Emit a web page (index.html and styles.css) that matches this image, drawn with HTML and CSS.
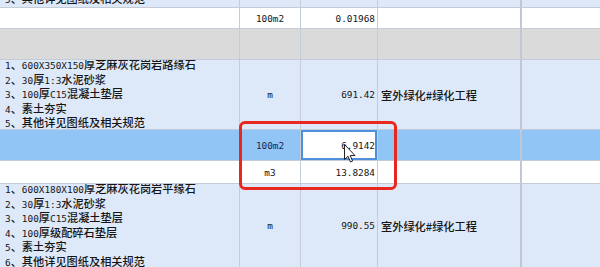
FILE: index.html
```html
<!DOCTYPE html>
<html lang="zh">
<head>
<meta charset="utf-8">
<title>清单</title>
<link rel="stylesheet" href="styles.css">
</head>
<body>
<div class="sheet">
  <div class="row blue r0">
    <div class="c c1 bottom"><div class="lines"><p><span class="a">5</span>、其他详见图纸及相关规范</p></div></div>
    <div class="c c2"></div><div class="c c3"></div><div class="c c4"></div><div class="c c5"></div>
  </div>
  <div class="row white r1">
    <div class="c c1"></div>
    <div class="c c2 mono center">100m2</div>
    <div class="c c3 mono right">0.01968</div>
    <div class="c c4"></div><div class="c c5"></div>
  </div>
  <div class="row grey r2">
    <div class="c c1"></div><div class="c c2"></div><div class="c c3"></div><div class="c c4"></div><div class="c c5"></div>
  </div>
  <div class="row blue r3">
    <div class="c c1"><div class="lines">
      <p><span class="a">1</span>、<span class="a">600X350X150</span>厚芝麻灰花岗岩路缘石</p>
      <p><span class="a">2</span>、<span class="a">30</span>厚<span class="a">1:3</span>水泥砂浆</p>
      <p><span class="a">3</span>、<span class="a">100</span>厚<span class="a">C15</span>混凝土垫层</p>
      <p><span class="a">4</span>、素土夯实</p>
      <p><span class="a">5</span>、其他详见图纸及相关规范</p>
    </div></div>
    <div class="c c2 mono center">m</div>
    <div class="c c3 mono right">691.42</div>
    <div class="c c4 cjk">室外绿化#绿化工程</div>
    <div class="c c5"></div>
  </div>
  <div class="row sel r4">
    <div class="c c1"></div>
    <div class="c c2 mono center navy">100m2</div>
    <div class="c c3 mono right edit">6.9142</div>
    <div class="c c4"></div><div class="c c5"></div>
  </div>
  <div class="row white r5">
    <div class="c c1"></div>
    <div class="c c2 mono center">m3</div>
    <div class="c c3 mono right">13.8284</div>
    <div class="c c4"></div><div class="c c5"></div>
  </div>
  <div class="row blue r6">
    <div class="c c1"><div class="lines">
      <p><span class="a">1</span>、<span class="a">600X180X100</span>厚芝麻灰花岗岩平缘石</p>
      <p><span class="a">2</span>、<span class="a">30</span>厚<span class="a">1:3</span>水泥砂浆</p>
      <p><span class="a">3</span>、<span class="a">100</span>厚<span class="a">C15</span>混凝土垫层</p>
      <p><span class="a">4</span>、<span class="a">100</span>厚级配碎石垫层</p>
      <p><span class="a">5</span>、素土夯实</p>
      <p><span class="a">6</span>、其他详见图纸及相关规范</p>
    </div></div>
    <div class="c c2 mono center">m</div>
    <div class="c c3 mono right">990.55</div>
    <div class="c c4 cjk">室外绿化#绿化工程</div>
    <div class="c c5"></div>
  </div>
</div>
<div class="mark"></div>
<svg class="cursor" width="12" height="19" viewBox="0 0 12 19" aria-hidden="true">
  <path d="M0.5 0.5 L0.5 15.5 L4 12.2 L6.5 18 L8.6 17.1 L6.2 11.5 L11 11.5 Z" fill="#ffffff" stroke="#222222" stroke-width="1" stroke-linejoin="round"/>
</svg>
</body>
</html>
```

FILE: styles.css
```css
html, body {
  margin: 0;
  padding: 0;
  background: #dde8f8;
  overflow: hidden;
}
body {
  font-family: "Noto Sans CJK SC", "Noto Sans", sans-serif;
  color: #151515;
  width: 600px;
  height: 267px;
}
.sheet {
  display: flex;
  flex-direction: column;
}
.row {
  display: grid;
  grid-template-columns: 240px 61px 77px 144px 1fr;
  border-bottom: 1px solid #c4ccd7;
  box-sizing: border-box;
}
.blue { background: #dde8f8; }
.white { background: #ffffff; }
.grey { background: #dadada; }
.sel { background: #91c5f5; }

.r0 { height: 8px; }
.r1 { height: 21px; }
.r2 { height: 31px; }
.r3 { height: 70px; }
.r4 { height: 31px; }
.r5 { height: 23px; }
.r6 { height: 84px; }

.c {
  border-right: 1px solid #c4ccd7;
  display: flex;
  align-items: center;
  overflow: hidden;
  min-width: 0;
}
.c4 { border-right: 2px solid #c0c8d3; }
.c5 { border-right: none; }
.bottom { align-items: flex-end; }

.lines {
  padding-left: 5px;
  font-size: 11.2px;
  font-weight: 500;
  line-height: 13.6px;
  white-space: nowrap;
}
.r6 .lines { line-height: 13.5px; }
.lines p { margin: 0; }
.a {
  font-family: "DejaVu Sans Mono", "Liberation Mono", monospace;
  font-size: 9.4px;
  font-weight: 400;
}
.mono {
  font-family: "DejaVu Sans Mono", "Liberation Mono", monospace;
  font-size: 9.4px;
}
.center { justify-content: center; }
.right { justify-content: flex-end; padding-right: 2px; }
.navy { color: #17264f; }
.cjk {
  font-size: 11.2px;
  font-weight: 500;
  padding-left: 3px;
  white-space: nowrap;
}
.edit {
  background: #ffffff;
  box-shadow: inset 0 0 0 2px #4f8fdc;
}
.mark {
  position: absolute;
  left: 239px;
  top: 121px;
  width: 158px;
  height: 69px;
  box-sizing: border-box;
  border: 3px solid #e8281f;
  border-radius: 6px;
}
.cursor {
  position: absolute;
  left: 344px;
  top: 144px;
}
```
